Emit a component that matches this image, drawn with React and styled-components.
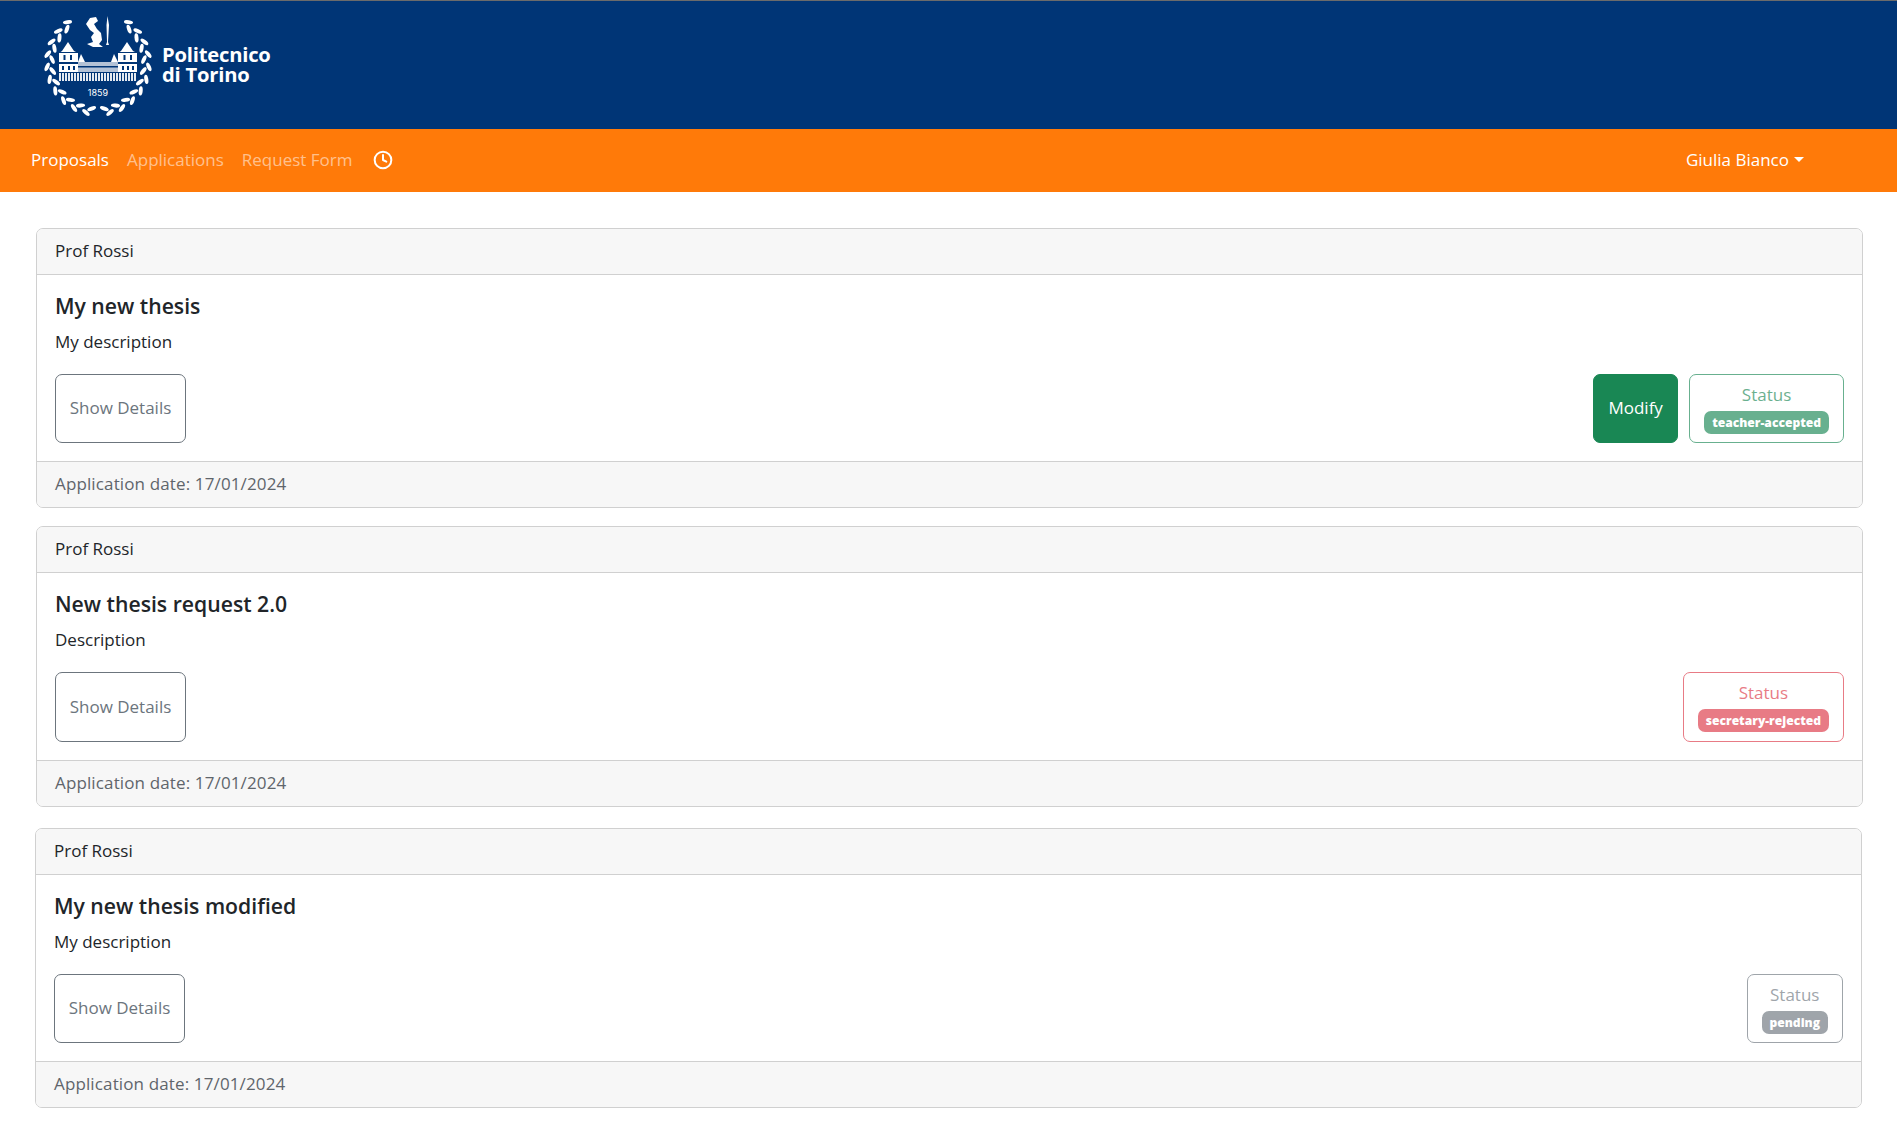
import styled, { createGlobalStyle } from "styled-components";
import { Clock } from "lucide-react";

const GlobalStyle = createGlobalStyle`
  body {
    margin: 0;
    background: #fff;
    color: #212529;
    font-family: "Open Sans", "Noto Sans", "Liberation Sans", sans-serif;
    font-size: 17px;
  }
`;

const TONES = {
  success: "#198754",
  danger: "#dc3545",
  secondary: "#6c757d",
};

const Banner = styled.header`
  height: 128px;
  border-top: 1px solid #6b6b6b;
  background: #003576;
  display: flex;
  align-items: center;
  padding-left: 43px;
`;

const LogoText = styled.div`
  margin-left: 9px;
  margin-top: -2px;
  color: #fff;
  font-family: "Open Sans", sans-serif;
  font-size: 20.2px;
  font-weight: 700;
  line-height: 20px;
  letter-spacing: -0.2px;
`;

const NavBar = styled.nav`
  height: 63px;
  background: #ff7a09;
  display: flex;
  align-items: center;
  padding: 0 76px 2px 22px;
  box-sizing: border-box;
`;

const NavLink = styled.a`
  padding: 0 9px;
  color: ${(p) => (p.$active ? "#fff" : "rgba(255,255,255,.55)")};
  line-height: 27px;
  white-space: nowrap;
`;

const ClockLink = styled.span`
  display: flex;
  padding: 0 11px;
  color: #fff;
`;

const UserMenu = styled.div`
  margin-left: auto;
  padding: 0 17px 0 0;
  display: flex;
  align-items: center;
  color: #fff;
  &::after {
    content: "";
    margin-left: 5px;
    border-top: 5px solid #fff;
    border-left: 5px solid transparent;
    border-right: 5px solid transparent;
  }
`;

const Main = styled.main`
  padding: 36px 34px 0 36px;
`;

const Card = styled.section`
  margin: ${(p) => p.$margin};
  border: 1px solid #d0d0d0;
  border-radius: 7px;
  overflow: hidden;
`;

const CardHeader = styled.div`
  height: 46px;
  box-sizing: border-box;
  display: flex;
  align-items: center;
  padding: 0 18px 2px;
  background: #f7f7f7;
  border-bottom: 1px solid #d0d0d0;
`;

const CardBody = styled.div`
  padding: 17px 18px 18px;
`;

const Title = styled.h5`
  margin: 0;
  font-size: 21.2px;
  font-weight: 600;
  line-height: 27px;
`;

const Description = styled.p`
  margin: 9px 0 19px;
  line-height: 27px;
`;

const Actions = styled.div`
  display: flex;
  align-items: stretch;
  gap: 11px;
  height: ${(p) => p.$height}px;
`;

const OutlineButton = styled.button`
  margin-right: auto;
  width: 131px;
  padding: 0 0 2px;
  border: 1px solid #6c757d;
  border-radius: 7px;
  background: transparent;
  color: #6c757d;
  font: inherit;
`;

const ModifyButton = styled.button`
  width: 85px;
  padding: 0 0 2px;
  border: 1px solid #198754;
  border-radius: 7px;
  background: #198754;
  color: #fff;
  font: inherit;
`;

const StatusBox = styled.div`
  box-sizing: border-box;
  padding: 6px 14px 0;
  display: flex;
  flex-direction: column;
  align-items: center;
  border: 1px solid ${(p) => TONES[p.$tone]};
  border-radius: 7px;
  color: ${(p) => TONES[p.$tone]};
  opacity: 0.65;
`;

const StatusLabel = styled.span`
  line-height: 27px;
`;

const Badge = styled.span`
  margin-top: 3px;
  padding: 0 8px;
  height: 23px;
  display: flex;
  align-items: center;
  border-radius: 7px;
  background: ${(p) => TONES[p.$tone]};
  color: #fff;
  font-size: 12.1px;
  font-weight: 800;
`;

const CardFooter = styled.div`
  height: 46px;
  box-sizing: border-box;
  display: flex;
  align-items: center;
  padding: 0 18px 2px;
  background: #f7f7f7;
  border-top: 1px solid #d0d0d0;
  color: #5f656b;
  letter-spacing: 0.13px;
`;

const leaves = [];
for (let i = 0; i < 10; i++) {
  const a = ((i + 0.55) * 14.4 * Math.PI) / 180;
  [-1, 1].forEach((side) => {
    [46, 51].forEach((r, k) => {
      const t = a + (k ? 0.1 : 0);
      const x = 98 + side * Math.sin(t) * r;
      const y = 63 + Math.cos(t) * r;
      const deg = (Math.atan2(y - 63, x - 98) * 180) / Math.PI + 90 + side * (k ? -28 : 28);
      leaves.push({ x, y, deg, key: `${i}-${side}-${k}` });
    });
  });
}

const columns = [];
for (let x = 59; x < 137; x += 3) columns.push(x);

const Seal = () => (
  <svg width="110" height="108" viewBox="43 11 110 108" fill="#fff" aria-hidden="true">
    {leaves.map((l) => (
      <ellipse
        key={l.key}
        cx={l.x}
        cy={l.y}
        rx="4.6"
        ry="2"
        transform={`rotate(${l.deg} ${l.x} ${l.y})`}
      />
    ))}
    {/* figure and spear */}
    <path d="M86 24 L90 18 L96 17 L98 21 L94 24 L97 29 L101 33 L102 40 L99 44 L103 47 L93 47 L87 44 L93 42 L91 37 L94 33 L90 30 Z" />
    <path d="M107.500 16 L109 25 L108 42 L109 45 L106 45 L107 42 L106.500 25 Z" />
    {/* towers */}
    <path d="M68 42 L74 51 L78 53 L78 72 L59 72 L59 53 L62 51 Z" />
    <path d="M127 42 L133 51 L137 53 L137 72 L118 72 L118 53 L121 51 Z" />
    <path d="M81 54 L85 62 L78 62 Z" />
    <path d="M114 54 L118 62 L111 62 Z" />
    <path d="M78 62 L118 62 L118 72 L78 72 Z" opacity=".7" />
    <g fill="#003576">
      <rect x="63.500" y="55" width="2" height="5" />
      <rect x="70" y="55" width="2" height="5" />
      <rect x="123.500" y="55" width="2" height="5" />
      <rect x="130" y="55" width="2" height="5" />
      <rect x="59" y="52" width="19" height="1" />
      <rect x="118" y="52" width="19" height="1" />
      <rect x="59" y="62" width="19" height="2" />
      <rect x="118" y="62" width="19" height="2" />
      <rect x="78" y="66" width="40" height="1.500" />
      <rect x="62" y="66" width="2" height="4" />
      <rect x="68" y="66" width="2" height="4" />
      <rect x="73" y="66" width="2" height="4" />
      <rect x="122" y="66" width="2" height="4" />
      <rect x="127" y="66" width="2" height="4" />
      <rect x="132" y="66" width="2" height="4" />
    </g>
    {columns.map((x) => (
      <rect key={x} x={x} y="73" width="2" height="8" opacity=".9" />
    ))}
    <text x="98" y="96" textAnchor="middle" fontSize="9" fontFamily="Inter, sans-serif">
      1859
    </text>
  </svg>
);

const applications = [
  {
    title: "My new thesis",
    description: "My description",
    tone: "success",
    status: "teacher-accepted",
    modify: true,
    margin: "0 0 18px",
    buttonHeight: 69,
  },
  {
    title: "New thesis request 2.0",
    description: "Description",
    tone: "danger",
    status: "secretary-rejected",
    margin: "0 0 21px",
    buttonHeight: 70,
  },
  {
    title: "My new thesis modified",
    description: "My description",
    tone: "secondary",
    status: "pending",
    margin: "0 1px 0 -1px",
    buttonHeight: 69,
  },
];

const App = () => {
  return (
    <>
      <GlobalStyle />
      <Banner>
        <Seal />
        <LogoText>
          Politecnico
          <br />
          di Torino
        </LogoText>
      </Banner>
      <NavBar>
        <NavLink $active>Proposals</NavLink>
        <NavLink>Applications</NavLink>
        <NavLink>Request Form</NavLink>
        <ClockLink>
          <Clock size={20} strokeWidth={2.4} />
        </ClockLink>
        <UserMenu>Giulia Bianco</UserMenu>
      </NavBar>
      <Main>
        {applications.map((a) => (
          <Card key={a.title} $margin={a.margin}>
            <CardHeader>Prof Rossi</CardHeader>
            <CardBody>
              <Title>{a.title}</Title>
              <Description>{a.description}</Description>
              <Actions $height={a.buttonHeight}>
                <OutlineButton>Show Details</OutlineButton>
                {a.modify && <ModifyButton>Modify</ModifyButton>}
                <StatusBox $tone={a.tone}>
                  <StatusLabel>Status</StatusLabel>
                  <Badge $tone={a.tone}>{a.status}</Badge>
                </StatusBox>
              </Actions>
            </CardBody>
            <CardFooter>Application date: 17/01/2024</CardFooter>
          </Card>
        ))}
      </Main>
    </>
  );
};

export default App;
